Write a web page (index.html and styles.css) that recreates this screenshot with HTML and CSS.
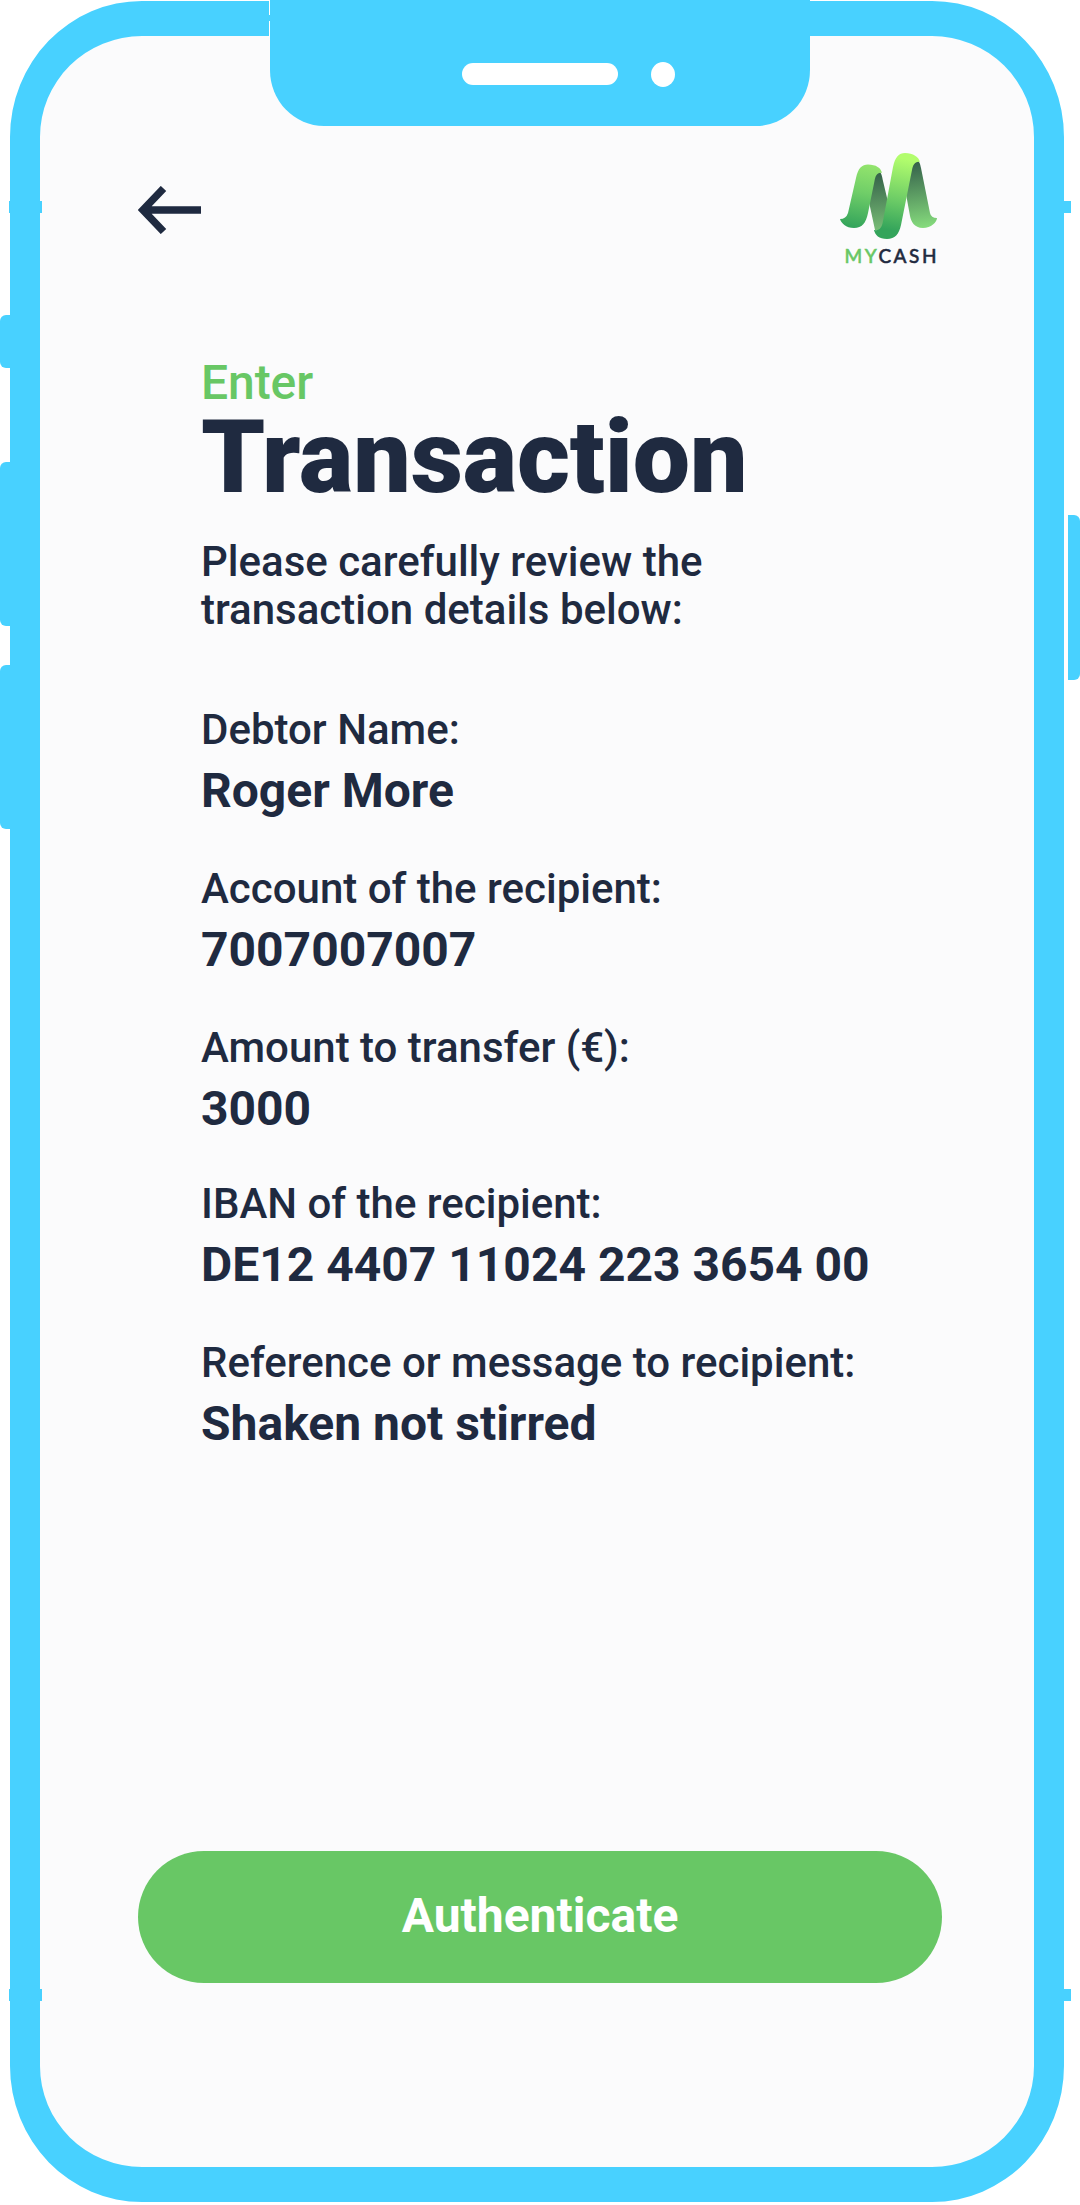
FILE: index.html
```html
<!DOCTYPE html>
<html lang="en">
<head>
<meta charset="utf-8">
<title>MyCash – Transaction</title>
<link rel="stylesheet" href="styles.css">
</head>
<body>
<div class="phone">
  <span class="key mute"></span>
  <span class="key volume-up"></span>
  <span class="key volume-down"></span>
  <span class="key power"></span>
  <span class="band left top"></span>
  <span class="band right top"></span>
  <span class="band left bottom"></span>
  <span class="band right bottom"></span>
  <div class="notch"><span class="speaker"></span><span class="camera"></span></div>
  <main class="screen">
    <header class="header">
      <button class="back" aria-label="Back">
        <svg width="63" height="48" viewBox="0 0 63 48"><path d="M63 24H5M25.500 2.500L5 24L25.500 45.500" fill="none" stroke="#1f2a40" stroke-width="7.500"/></svg>
      </button>
      <div class="logo">
        <svg width="98" height="87" viewBox="0 1 98 87">
          <defs>
            <linearGradient id="front" gradientUnits="userSpaceOnUse" x1="62" y1="2" x2="46" y2="86"><stop offset="0.05" stop-color="#b2fd6d"/><stop offset="0.55" stop-color="#6bcb66"/><stop offset="0.9" stop-color="#34a45b"/></linearGradient>
            <linearGradient id="left" gradientUnits="userSpaceOnUse" x1="30" y1="12" x2="18" y2="76"><stop offset="0" stop-color="#94e56d"/><stop offset="0.45" stop-color="#70ce68"/><stop offset="1" stop-color="#34a45b"/></linearGradient>
            <linearGradient id="fold" gradientUnits="userSpaceOnUse" x1="38" y1="24" x2="42" y2="78"><stop offset="0" stop-color="#38664b"/><stop offset="1" stop-color="#78bd76"/></linearGradient>
            <linearGradient id="tail" gradientUnits="userSpaceOnUse" x1="75" y1="12" x2="84" y2="76"><stop offset="0" stop-color="#37644c"/><stop offset="1" stop-color="#86dc7d"/></linearGradient>
          </defs>
          <path d="M74 9C79 7 80 11 81 16L90 61Q91 66 97 66C97 70 91 76 83 76C74 76 71 69 70 64L66 42L70 15Z" fill="url(#tail)"/>
          <path d="M37 20C41 18 42 24 43 29L48 50L43 78H35L29 50L33 24Z" fill="url(#fold)"/>
          <path d="M0 67Q6 67 8 61L16 26C18 16 22 12.500 28 12.500C36 12.500 41 16 42 21C37 20 35.500 24 34.500 29L28 61C26 71 22 76 14 76C6 76 1 71 0 67Z" fill="url(#left)"/>
          <path d="M34 78C40 79 42 75 43 69L53 15C55 5 59 1 65 1C73 1 79 5 80 10C75 9 73 13 72 18L61 73C59 82 55 87 47 87C39 87 35 83 34 78Z" fill="url(#front)"/>
        </svg>
        <div class="wordmark"><span>MY</span>CASH</div>
      </div>
    </header>
    <section class="content">
      <p class="eyebrow">Enter</p>
      <h1 class="title">Transaction</h1>
      <p class="intro">Please carefully review the<br>transaction details below:</p>
      <dl class="details">
        <div class="field"><dt>Debtor Name:</dt><dd>Roger More</dd></div>
        <div class="field"><dt>Account of the recipient:</dt><dd>7007007007</dd></div>
        <div class="field amount"><dt>Amount to transfer (€):</dt><dd>3000</dd></div>
        <div class="field"><dt>IBAN of the recipient:</dt><dd>DE12 4407 11024 223 3654 00</dd></div>
        <div class="field"><dt>Reference or message to recipient:</dt><dd>Shaken not stirred</dd></div>
      </dl>
    </section>
    <button class="submit">Authenticate</button>
  </main>
</div>
</body>
</html>
```
FILE: styles.css
```css
* { box-sizing: border-box; }
body { margin: 0; background: #fff; color: #1f2a40; font-family: Roboto, sans-serif; }
p, h1, dl, dd { margin: 0; }
button { border: 0; padding: 0; font-family: inherit; }
svg { display: block; }

.phone { position: relative; width: 1080px; height: 2205px; padding: 1px 16px 3px 10px; overflow: hidden; }
.screen {
  display: flex; flex-direction: column; height: 2201px;
  border: solid #48d1ff; border-width: 35px 30px; border-radius: 132px / 136px;
  background: #fbfbfc; padding: 0 92px 184px 98px;
}
.key, .band, .notch { position: absolute; background: #48d1ff; }
.mute, .volume-up, .volume-down { left: 0; width: 11px; border-radius: 6px 0 0 6px; }
.mute { top: 315px; height: 53px; }
.volume-up { top: 462px; height: 164px; }
.volume-down { top: 665px; height: 164px; }
.power { left: 1068px; top: 515px; width: 12px; height: 165px; border-radius: 0 6px 6px 0; }
.band { height: 12px; }
.band.left { left: 9px; width: 33px; }
.band.right { left: 1063px; width: 8px; }
.band.top { top: 201px; }
.band.bottom { top: 1989px; }
.notch { left: 270px; top: 0; width: 540px; height: 126px; border-radius: 0 0 54px 54px / 0 0 56px 56px; }
.notch::before, .notch::after { content: ""; position: absolute; left: -1px; width: 1px; background: #fff; }
.notch::before { top: 0; height: 15px; }
.notch::after { top: 21px; height: 16px; }
.speaker, .camera { position: absolute; background: #fff; }
.speaker { left: 192px; top: 63px; width: 156px; height: 21.500px; border-radius: 11px; }
.camera { left: 381px; top: 62px; width: 24px; height: 25px; border-radius: 50%; }

.header { display: flex; justify-content: space-between; height: 318px; }
.back { width: 63px; height: 48px; margin-top: 150px; background: none; }
.logo { width: 102px; margin-top: 117px; }
.wordmark { margin: 4px 0 0 4.500px; font: 500 19px/24px Lato, sans-serif; letter-spacing: 2.500px; -webkit-text-stroke: 0.500px; white-space: nowrap; }
.wordmark span { color: #68c765; }

.content { padding-left: 63px; flex: 1; white-space: nowrap; }
.eyebrow { color: #68c765; font-size: 48px; font-weight: 500; line-height: 58px; letter-spacing: -0.100px; }
.title { font-size: 102px; font-weight: 900; line-height: 90px; letter-spacing: -0.100px; }
.intro { margin-top: 36px; font-size: 42px; font-weight: 500; line-height: 48px; }
.details { margin-top: 70px; }
.field { height: 159px; }
.field.amount { height: 156px; }
dt { font-size: 42px; font-weight: 500; line-height: 52px; }
dd { font-size: 48px; font-weight: 700; line-height: 70px; }
.submit { height: 132px; padding-bottom: 3px; border-radius: 66px; background: #68c765; color: #fff; font-size: 48px; font-weight: 700; }
```
